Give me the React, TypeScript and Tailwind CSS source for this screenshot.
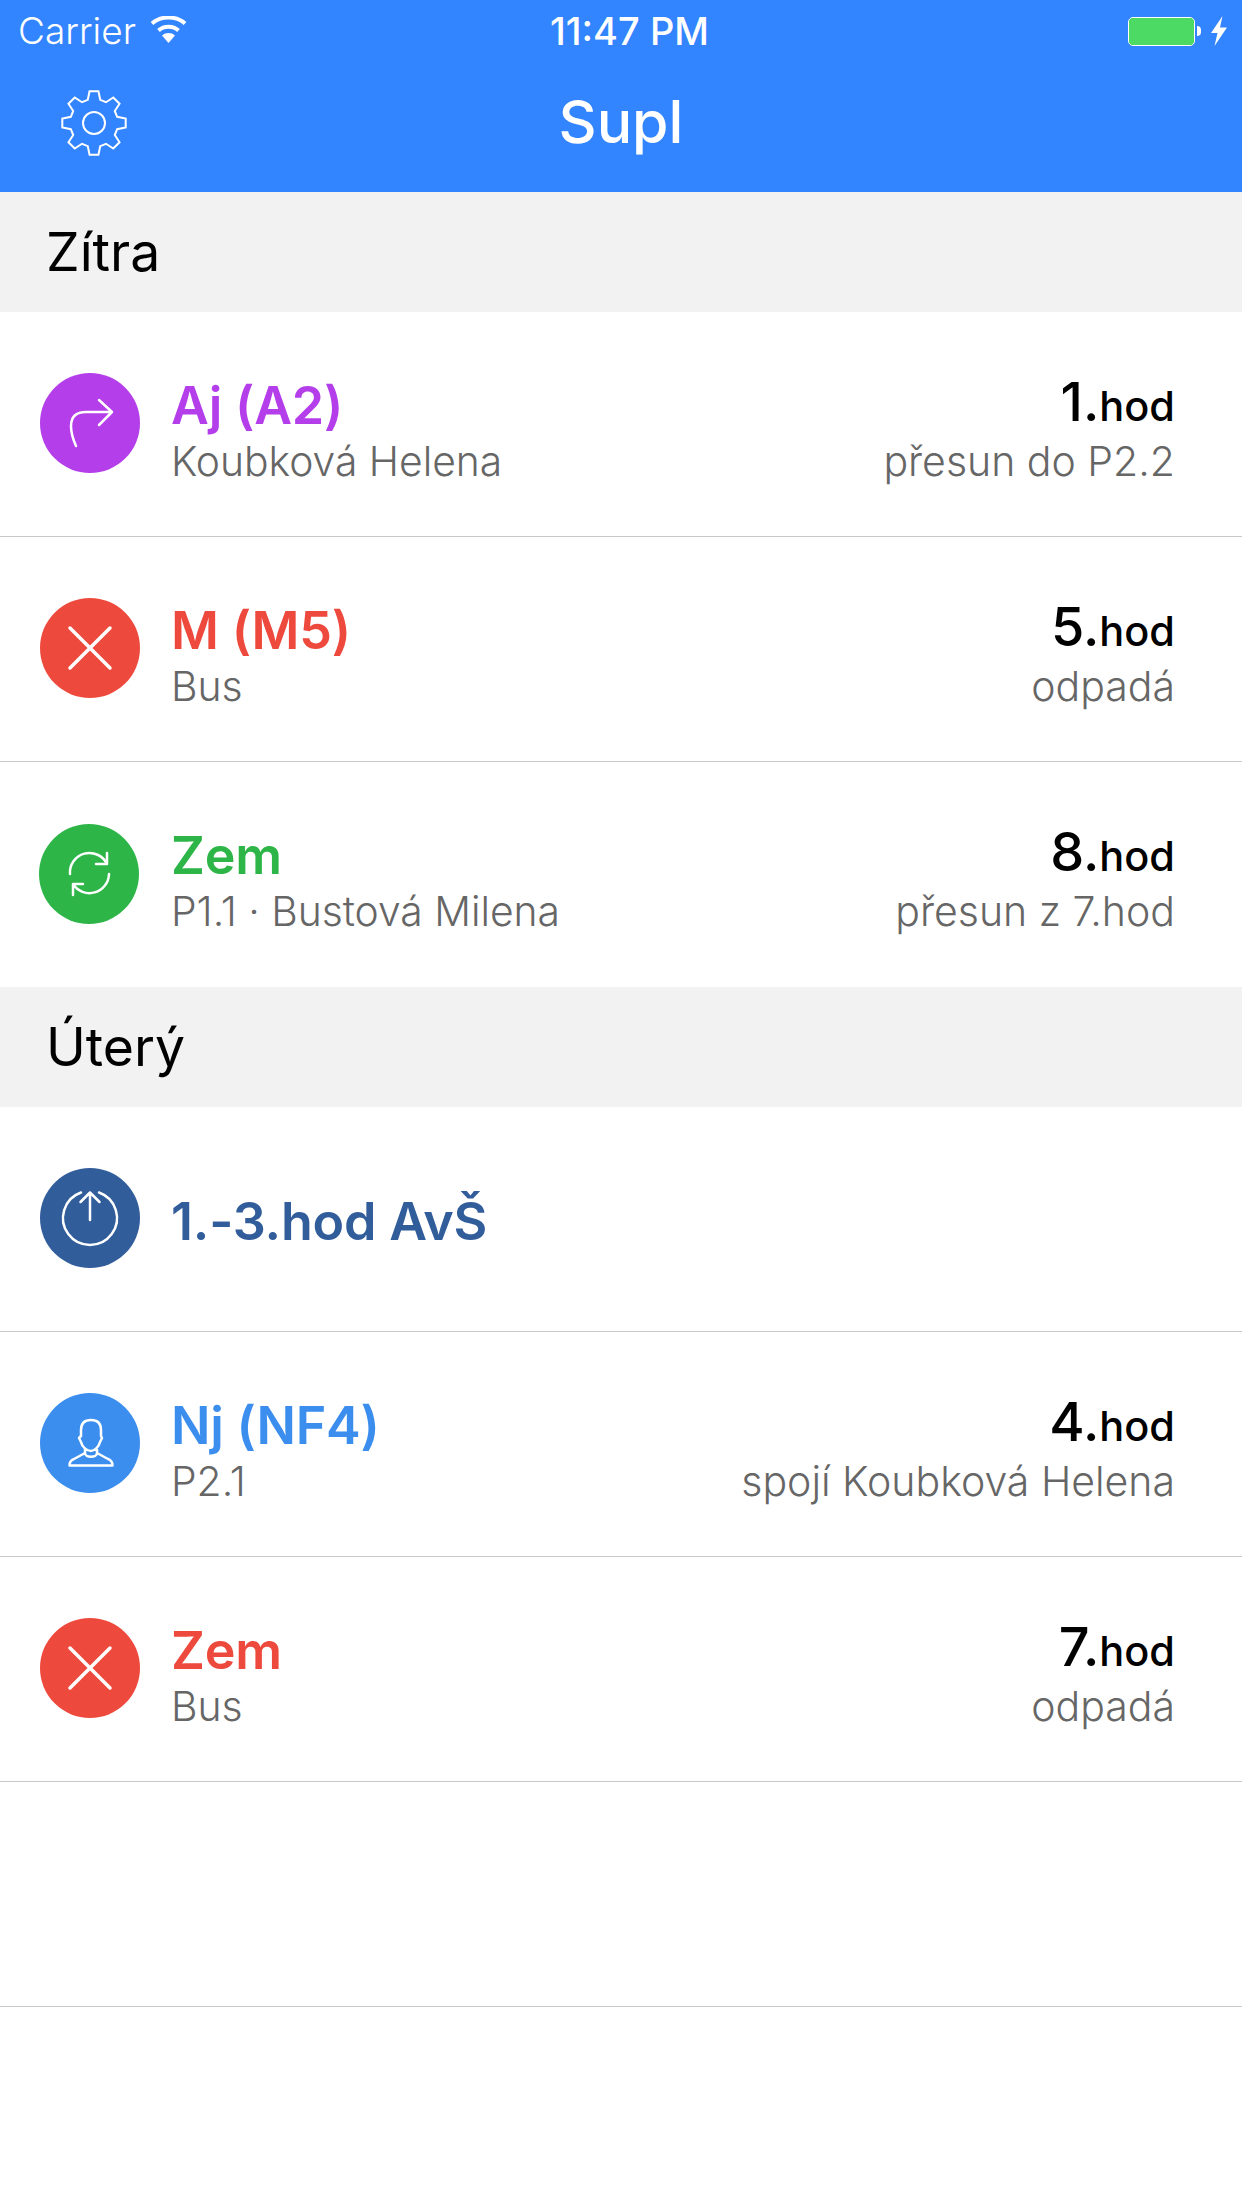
import type { ReactNode } from 'react';

const font = { fontFamily: 'Inter, "Liberation Sans", sans-serif' };

// ozubené kolo pro nastavení
const gearPath = () => {
  const pts: string[] = [];
  const teeth = 8;
  for (let i = 0; i < teeth; i++) {
    const a = (i * 360) / teeth - 90;
    const p = (deg: number, r: number) => {
      const t = ((a + deg) * Math.PI) / 180;
      return `${(33 + r * Math.cos(t)).toFixed(2)} ${(33 + r * Math.sin(t)).toFixed(2)}`;
    };
    pts.push(p(-15, 24), p(-8, 32), p(8, 32), p(15, 24));
  }
  return `M${pts.join('L')}Z`;
};

const icons: Record<string, ReactNode> = {
  forward: <path d="M36 73C32 64 31 59 31 53C31 44 36 39 46 39H72M59 27L72 39L59 52" />,
  cancel: <path strokeWidth="3.5" d="M30 30L70 70M70 30L30 70" />,
  swap: (
    <path d="M31 50A19.5 19.5 0 0 1 68 40M68 29V40H57M70 50A19.5 19.5 0 0 1 34 60M34 71V60H44" />
  ),
  power: <path d="M41 24.5A27 27 0 1 0 59 24.5M50 52V24.5M40.5 34L50 24.5L59.5 34" />,
  person: (
    <path d="M41 37C41 30 45 27 51 27C57 27 61 30 61 37L61 43L62 45L60 49C59 54 54 58 51 58C47 58 42 54 41 49L39 45L41 43ZM45 56V60C45 65 57 65 57 60V56M45 60L34 66C31 67 29 70 29.5 72.5H72.5C73 70 71 67 68 66L57 60" />
  ),
};

type Row = {
  icon: string;
  circle: string;
  color: string;
  title: string;
  sub?: string;
  num?: string;
  note?: string;
};

const tomorrow: Row[] = [
  { icon: 'forward', circle: 'bg-[#b43eea] -mt-[2px]', color: 'text-[#b43eea]', title: 'Aj (A2)', sub: 'Koubková Helena', num: '1.', note: 'přesun do P2.2' },
  { icon: 'cancel', circle: 'bg-[#ee493d] -mt-[2px]', color: 'text-[#ee493d]', title: 'M (M5)', sub: 'Bus', num: '5.', note: 'odpadá' },
  { icon: 'swap', circle: 'bg-[#2db548] -ml-px mr-px', color: 'text-[#2db548]', title: 'Zem', sub: 'P1.1 · Bustová Milena', num: '8.', note: 'přesun z 7.hod' },
];

const tuesday: Row[] = [
  { icon: 'power', circle: 'bg-[#315d9b] -mt-[2px]', color: 'text-[#315d9b]', title: '1.-3.hod AvŠ' },
  { icon: 'person', circle: 'bg-[#3b8eee] -mt-[2px]', color: 'text-[#3b8eee]', title: 'Nj (NF4)', sub: 'P2.1', num: '4.', note: 'spojí Koubková Helena' },
  { icon: 'cancel', circle: 'bg-[#ee493d] -mt-[2px]', color: 'text-[#ee493d]', title: 'Zem', sub: 'Bus', num: '7.', note: 'odpadá' },
];

function ListRow({ row, noLine }: { row: Row; noLine?: boolean }) {
  return (
    <div className={`flex h-[225px] items-center border-b pl-[40px] pr-[67px] ${noLine ? 'border-transparent' : 'border-[#c8c7cc]'}`}>
      <div className={`h-[100px] w-[100px] shrink-0 rounded-full ${row.circle}`}>
        <svg viewBox="0 0 100 100" className="h-full w-full" fill="none" stroke="white" strokeWidth="2.5" strokeLinecap="round" strokeLinejoin="round">
          {icons[row.icon]}
        </svg>
      </div>
      <div className={`ml-[31px] flex flex-col ${row.sub ? 'pt-[14px]' : 'pt-[6px]'}`}>
        <span className={`text-[52px] leading-[60px] font-semibold tracking-[-0.2px] ${row.color}`}>{row.title}</span>
        {row.sub && <span className="text-[40.8px] leading-[50px] font-light text-[#666666]">{row.sub}</span>}
      </div>
      {row.num && (
        <div className="ml-auto flex flex-col items-end pt-[18px]">
          <span className="leading-[42px] text-black">
            <span className="text-[54px] font-medium">{row.num}</span>
            <span className="text-[41.5px] font-medium">hod</span>
          </span>
          <span className="text-[41px] leading-[50px] font-light text-[#666666]">{row.note}</span>
        </div>
      )}
    </div>
  );
}

function Section({ title }: { title: string }) {
  return (
    <div className="flex h-[120px] items-center bg-[#f2f2f2] pl-[46px] text-[53.5px] text-black">
      {title}
    </div>
  );
}

export default function App() {
  return (
    <div className="min-h-[2208px] w-[1242px] overflow-hidden bg-white" style={font}>
      <div className="h-[192px] bg-[#3284ff] text-white">
        {/* status bar */}
        <div className="grid h-[60px] grid-cols-[1fr_auto_1fr] items-center pl-[18px] pr-[15px] pt-[2px]">
          <div className="flex items-center gap-[14px] text-[37px] font-light">
            <span>Carrier</span>
            <svg width="37" height="27" viewBox="0 0 37 27" fill="none" className="-mt-[3px]">
              <path d="M18.5 27L12 19.5C15.5 16.2 21.5 16.2 25 19.5Z" fill="white" />
              <path d="M8.5 14.5C14 9.5 23 9.5 28.5 14.5" stroke="white" strokeWidth="4" />
              <path d="M2 7.5C11 -0.5 26 -0.5 35 7.5" stroke="white" strokeWidth="4" />
            </svg>
          </div>
          <span className="pl-[14px] text-[38px] font-medium">11:47 PM</span>
          <div className="flex items-center justify-end">
            <div className="h-[29px] w-[67px] rounded-[5px] border border-white bg-[#4cd964] outline-1 -outline-offset-2 outline-[#4cd964]" />
            <div className="ml-[2px] h-[10px] w-[4px] rounded-r-full bg-white" />
            <svg className="ml-[10px]" width="16" height="30" viewBox="0 0 16 30">
              <path d="M11.5 0L0 17H6.5L3.5 30L16 11.5H9Z" fill="white" />
            </svg>
          </div>
        </div>
        {/* nav bar */}
        <div className="grid h-[132px] grid-cols-[1fr_auto_1fr] items-center pl-[60px]">
          <svg width="68" height="68" viewBox="-1 -1 68 68" fill="none" stroke="white" strokeWidth="2" className="-mt-[6px]">
            <path d={gearPath()} />
            <circle cx="33" cy="33" r="11" />
          </svg>
          <span className="-ml-[60px] -mt-[8px] text-[59px] font-medium">Supl</span>
          <div />
        </div>
      </div>

      <Section title="Zítra" />
      {tomorrow.map((r, i) => (
        <ListRow key={r.title} row={r} noLine={i === tomorrow.length - 1} />
      ))}
      <Section title="Úterý" />
      {tuesday.map((r) => (
        <ListRow key={r.title + r.icon} row={r} />
      ))}
      <div className="h-[225px] border-b border-[#c8c7cc]" />
    </div>
  );
}
